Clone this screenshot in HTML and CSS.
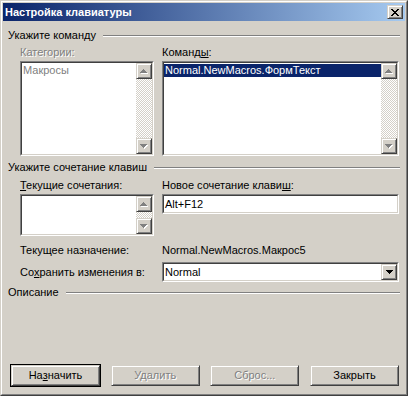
FILE: index.html
```html
<!DOCTYPE html>
<html lang="ru">
<head>
<meta charset="utf-8">
<title>Настройка клавиатуры</title>
<link rel="stylesheet" href="styles.css">
</head>
<body>
<div class="window">
  <div class="frame">
    <div class="titlebar">
      <span class="title">Настройка клавиатуры</span>
      <div class="close raised">
        <svg width="8" height="7" viewBox="0 0 8 7" shape-rendering="crispEdges"><path fill="#000" d="M0 0h2v1H0zM6 0h2v1H6zM1 1h2v1H1zM5 1h2v1H5zM2 2h4v1H2zM3 3h2v1H3zM2 4h4v1H2zM1 5h2v1H1zM5 5h2v1H5zM0 6h2v1H0zM6 6h2v1H6z"/></svg>
      </div>
    </div>
    <div class="content">
      <div class="group-head"><span>Укажите команду</span><div class="etch"></div></div>
      <div class="grid cmd">
        <div class="label disabled">Категории:</div>
        <div class="label">Команд<u>ы</u>:</div>
        <div class="sunken list-tall">
          <div class="inner">
            <div class="items"><div class="item disabled">Макросы</div></div>
            <div class="scrollbar">
              <div class="sb-btn raised"><svg width="8" height="5" viewBox="0 0 8 5" shape-rendering="crispEdges"><path fill="#fff" d="M4 1h1v1H4zM3 2h3v1H3zM2 3h5v1H2zM1 4h7v1H1z"/><path fill="#808080" d="M3 0h1v1H3zM2 1h3v1H2zM1 2h5v1H1zM0 3h7v1H0z"/></svg></div>
              <div class="sb-track"></div>
              <div class="sb-btn raised"><svg width="8" height="5" viewBox="0 0 8 5" shape-rendering="crispEdges"><path fill="#fff" d="M1 1h7v1H1zM2 2h5v1H2zM3 3h3v1H3zM4 4h1v1H4z"/><path fill="#808080" d="M0 0h7v1H0zM1 1h5v1H1zM2 2h3v1H2zM3 3h1v1H3z"/></svg></div>
            </div>
          </div>
        </div>
        <div class="sunken list-tall">
          <div class="inner">
            <div class="items"><div class="item selected">Normal.NewMacros.ФормТекст</div></div>
            <div class="scrollbar">
              <div class="sb-btn raised"><svg width="8" height="5" viewBox="0 0 8 5" shape-rendering="crispEdges"><path fill="#fff" d="M4 1h1v1H4zM3 2h3v1H3zM2 3h5v1H2zM1 4h7v1H1z"/><path fill="#808080" d="M3 0h1v1H3zM2 1h3v1H2zM1 2h5v1H1zM0 3h7v1H0z"/></svg></div>
              <div class="sb-track"></div>
              <div class="sb-btn raised"><svg width="8" height="5" viewBox="0 0 8 5" shape-rendering="crispEdges"><path fill="#fff" d="M1 1h7v1H1zM2 2h5v1H2zM3 3h3v1H3zM4 4h1v1H4z"/><path fill="#808080" d="M0 0h7v1H0zM1 1h5v1H1zM2 2h3v1H2zM3 3h1v1H3z"/></svg></div>
            </div>
          </div>
        </div>
      </div>

      <div class="group-head gap2"><span>Укажите сочетание клавиш</span><div class="etch"></div></div>
      <div class="grid keys">
        <div class="label"><u>Т</u>екущие сочетания:</div>
        <div class="label">Новое сочетание клави<u>ш</u>:</div>
        <div class="sunken list-short">
          <div class="inner">
            <div class="items"></div>
            <div class="scrollbar">
              <div class="sb-btn raised"><svg width="8" height="5" viewBox="0 0 8 5" shape-rendering="crispEdges"><path fill="#fff" d="M4 1h1v1H4zM3 2h3v1H3zM2 3h5v1H2zM1 4h7v1H1z"/><path fill="#808080" d="M3 0h1v1H3zM2 1h3v1H2zM1 2h5v1H1zM0 3h7v1H0z"/></svg></div>
              <div class="sb-track"></div>
              <div class="sb-btn raised"><svg width="8" height="5" viewBox="0 0 8 5" shape-rendering="crispEdges"><path fill="#fff" d="M1 1h7v1H1zM2 2h5v1H2zM3 3h3v1H3zM4 4h1v1H4z"/><path fill="#808080" d="M0 0h7v1H0zM1 1h5v1H1zM2 2h3v1H2zM3 3h1v1H3z"/></svg></div>
            </div>
          </div>
        </div>
        <div class="sunken field">
          <div class="inner"><span class="field-text">Alt+F12</span></div>
        </div>
      </div>

      <div class="assign">
        <div class="label">Текущее назначение:</div>
        <div class="label">Normal.NewMacros.Макрос5</div>
        <div class="label row2">Со<u>х</u>ранить изменения в:</div>
        <div class="sunken field row2">
          <div class="inner">
            <span class="field-text grow">Normal</span>
            <div class="dd-btn raised"><svg width="7" height="4" viewBox="0 0 7 4" shape-rendering="crispEdges"><path fill="#000" d="M0 0h7v1H0zM1 1h5v1H1zM2 2h3v1H2zM3 3h1v1H3z"/></svg></div>
          </div>
        </div>
      </div>

      <div class="group-head gap3"><span>Описание</span><div class="etch"></div></div>
      <div class="spacer"></div>

      <div class="buttons">
        <div class="btn raised default">На<u>з</u>начить</div>
        <div class="btn raised disabled">Удалить</div>
        <div class="btn raised disabled">Сброс...</div>
        <div class="btn raised">Закрыть</div>
      </div>
    </div>
  </div>
</div>
</body>
</html>
```

FILE: styles.css
```css
* { box-sizing: border-box; }
html, body { margin: 0; padding: 0; }
body {
  width: 408px;
  height: 396px;
  overflow: hidden;
  background: #d4d0c8;
  color: #000;
  font-family: "Liberation Sans", Arial, sans-serif;
  font-size: 11px;
  line-height: 13px;
}
.window {
  width: 408px;
  height: 396px;
  border: 1px solid;
  border-color: #d4d0c8 #404040 #404040 #d4d0c8;
}
.frame {
  height: 100%;
  border: 1px solid;
  border-color: #fff #808080 #808080 #fff;
  padding: 1px;
  display: flex;
  flex-direction: column;
  background: #d4d0c8;
}
.titlebar {
  flex: none;
  height: 18px;
  display: flex;
  align-items: center;
  padding-left: 2px;
  background: linear-gradient(to right, #0a246a, #a6caf0);
}
.title {
  flex: 1;
  color: #fff;
  font-weight: bold;
}
.raised {
  background: #d4d0c8;
  border: 1px solid;
  border-color: #d4d0c8 #404040 #404040 #d4d0c8;
  box-shadow: inset 1px 1px #fff, inset -1px -1px #808080;
}
.close {
  width: 16px;
  height: 14px;
  margin-right: 2px;
  display: flex;
  align-items: center;
  justify-content: center;
}
.close svg { display: block; margin-left: 0; }
.content {
  flex: 1;
  display: flex;
  flex-direction: column;
  padding: 0 5px 7px 5px;
}
.group-head {
  display: flex;
  gap: 7px;
  height: 13px;
  margin-top: 8px;
  white-space: nowrap;
}
.group-head.gap2 { margin-top: 5px; }
.group-head.gap3 { margin-top: 4px; }
.etch {
  flex: 1;
  height: 2px;
  margin-top: 6px;
  border-top: 1px solid #808080;
  border-bottom: 1px solid #fff;
}
.grid {
  display: grid;
  grid-template-columns: 134px 1fr;
  column-gap: 8px;
  row-gap: 2px;
  margin: 4px 1px 0 12px;
  align-items: start;
}
.grid.keys { margin-top: 5px; }
.label { height: 13px; white-space: nowrap; }
.disabled { color: #808080; text-shadow: 1px 1px #fff; }
.sunken {
  border: 1px solid;
  border-color: #808080 #fff #fff #808080;
}
.sunken > .inner {
  height: 100%;
  border: 1px solid;
  border-color: #404040 #d4d0c8 #d4d0c8 #404040;
  background: #fff;
  display: flex;
}
.list-tall { height: 95px; }
.list-short { height: 42px; }
.field { height: 20px; }
.items {
  flex: 1;
  padding-top: 1px;
  min-width: 0;
}
.item {
  height: 13px;
  padding-left: 1px;
  white-space: nowrap;
}
.item.disabled { text-shadow: none; }
.item.selected { background: #0a246a; color: #fff; }
.scrollbar {
  width: 16px;
  display: flex;
  flex-direction: column;
}
.sb-btn {
  height: 16px;
  flex: none;
  display: flex;
  align-items: center;
  justify-content: center;
}
.sb-btn svg { display: block; margin-left: 0; }
.sb-track {
  flex: 1;
  background: repeating-conic-gradient(#fff 0 25%, #d4d0c8 0 50%) 0 0 / 2px 2px;
}
.field .inner { align-items: center; }
.field-text { padding-left: 1px; white-space: nowrap; }
.grow { flex: 1; }
.dd-btn {
  width: 16px;
  height: 16px;
  display: flex;
  align-items: center;
  justify-content: center;
}
.dd-btn svg { display: block; }
.assign {
  display: grid;
  grid-template-columns: 142px 1fr;
  margin: 8px 1px 0 12px;
  align-items: center;
}
.assign .row2 { margin-top: 5px; }
.spacer { flex: 1; }
.buttons {
  display: flex;
  justify-content: space-between;
  margin: 0 1px 0 3px;
}
.btn {
  width: 89px;
  height: 21px;
  display: flex;
  align-items: center;
  justify-content: center;
  white-space: nowrap;
}
.btn.default { outline: 1px solid #000; }
```
